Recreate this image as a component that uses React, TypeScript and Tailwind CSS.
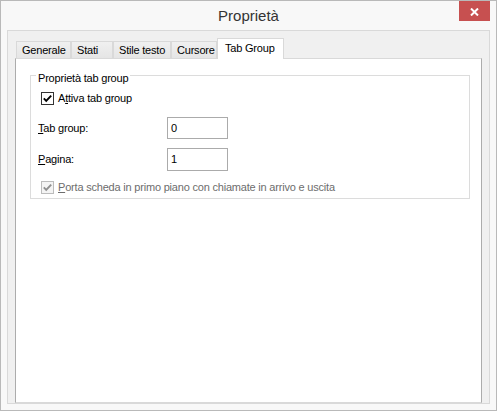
import React from 'react';

const tabs = [
  { label: 'Generale', w: 'w-[55px]' },
  { label: 'Stati', w: 'w-[42px]' },
  { label: 'Stile testo', w: 'w-[58px]' },
  { label: 'Cursore', w: 'w-[46px]' },
];

const CheckBox = ({ disabled }: { disabled?: boolean }) => (
  <span
    className={`flex h-[13px] w-[13px] shrink-0 items-center justify-center border ${
      disabled ? 'border-[#bcbcbc] bg-[#f4f4f4]' : 'border-[#333333] bg-white'
    }`}
  >
    <svg width="11" height="11" viewBox="0 0 11 11">
      <path
        d="M1.8 5.4 L4.2 7.8 L9.2 2.6"
        fill="none"
        stroke={disabled ? '#8f8f8f' : '#000000'}
        strokeWidth="1.9"
      />
    </svg>
  </span>
);

export default function App() {
  return (
    <div className="flex h-[411px] w-[497px] flex-col border border-[#b9b9b9] bg-[#f8f8f8] font-['Liberation_Sans',Arial,sans-serif] text-[11px] tracking-[-0.2px] text-black">
      {/* title bar */}
      <div className="grid h-[29px] grid-cols-[1fr_auto_1fr]">
        <div />
        <div className="text-[15px] leading-[29px] tracking-normal text-[#333333]">Proprietà</div>
        <div className="flex justify-end pr-[6px]">
          <div className="flex h-[20px] w-[31px] items-center justify-center bg-[#c75050]">
            <svg width="9" height="8" viewBox="0 0 9 8" className="mt-[2px]">
              <path d="M1 0.5 L8 7.5 M8 0.5 L1 7.5" stroke="#ffffff" strokeWidth="2" />
            </svg>
          </div>
        </div>
      </div>

      {/* client area */}
      <div className="mx-[6px] mb-[6px] flex flex-1 flex-col border border-[#d9d9d9] bg-[#f0f0f0]">
        <div className="relative z-10 -mb-px ml-[8px] mt-[7px] flex items-end">
          {tabs.map((t) => (
            <div
              key={t.label}
              className={`${t.w} h-[18px] border border-[#d9d9d9] bg-linear-to-b from-[#f0f0f0] to-[#e5e5e5] pl-[5px] leading-[16px] whitespace-nowrap`}
            >
              {t.label}
            </div>
          ))}
          <div className="h-[21px] w-[67px] border border-b-0 border-[#d9d9d9] bg-white pl-[7px] leading-[18px] whitespace-nowrap">
            Tab Group
          </div>
        </div>

        <div className="mx-[7px] flex-1 border border-x-[#acacac] border-y-[#d9d9d9] bg-white">
          <div className="relative ml-[14px] mt-[16px] w-[440px] border border-[#dcdcdc] pb-[4px]">
            <span className="absolute left-[5px] top-[-4px] bg-white px-[2px] leading-[12px]">Proprietà tab group</span>

            <div className="flex items-center pl-[10px] pt-[16px]">
              <CheckBox />
              <span className="ml-[4px] leading-[13px]">
                A<span className="underline">t</span>tiva tab group
              </span>
            </div>

            <div className="mt-[12px] flex items-center pl-[7px]">
              <span className="w-[129px] leading-[13px]">
                <span className="underline">T</span>ab group:
              </span>
              <div className="h-[22px] w-[61px] border border-[#ababab] bg-white pl-[3px] leading-[20px]">0</div>
            </div>

            <div className="mt-[9px] flex items-center pl-[7px]">
              <span className="w-[129px] leading-[13px]">
                <span className="underline">P</span>agina:
              </span>
              <div className="h-[23px] w-[61px] border border-[#ababab] bg-white pl-[3px] leading-[20px]">1</div>
            </div>

            <div className="mt-[10px] flex items-center pl-[10px]">
              <CheckBox disabled />
              <span className="ml-[4px] leading-[13px] text-[#6d6d6d]">
                <span className="underline">P</span>orta scheda in primo piano con chiamate in arrivo e uscita
              </span>
            </div>
          </div>
        </div>
      </div>
    </div>
  );
}
